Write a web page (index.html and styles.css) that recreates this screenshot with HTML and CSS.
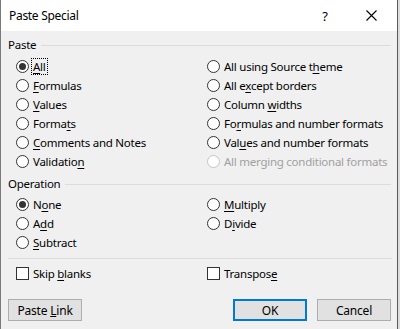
FILE: index.html
```html
<!DOCTYPE html>
<html>
<head>
<meta charset="utf-8">
<link rel="stylesheet" href="styles.css">
</head>
<body>
<div class="window">
  <div class="titlebar">
    <span class="title">Paste Special</span>
    <span class="help">?</span>
    <span class="close"><svg width="11" height="11" viewBox="0 0 11 11"><path d="M0.5 0.5 L10.5 10.5 M10.5 0.5 L0.5 10.5" stroke="#000" stroke-width="1.1" fill="none"/></svg></span>
  </div>
  <div class="content">
    <div class="legend legend-paste"><span>Paste</span><span class="rule"></span></div>
    <div class="grid grid-paste">
      <label class="opt"><span class="radio checked"></span><span class="txt focus"><u>A</u>ll</span></label>
      <label class="opt"><span class="radio"></span><span class="txt">All using Source t<u>h</u>eme</span></label>
      <label class="opt"><span class="radio"></span><span class="txt"><u>F</u>ormulas</span></label>
      <label class="opt"><span class="radio"></span><span class="txt">All e<u>x</u>cept borders</span></label>
      <label class="opt"><span class="radio"></span><span class="txt"><u>V</u>alues</span></label>
      <label class="opt"><span class="radio"></span><span class="txt">Column <u>w</u>idths</span></label>
      <label class="opt"><span class="radio"></span><span class="txt">Forma<u>t</u>s</span></label>
      <label class="opt"><span class="radio"></span><span class="txt">Fo<u>r</u>mulas and number formats</span></label>
      <label class="opt"><span class="radio"></span><span class="txt"><u>C</u>omments and Notes</span></label>
      <label class="opt"><span class="radio"></span><span class="txt">Val<u>u</u>es and number formats</span></label>
      <label class="opt"><span class="radio"></span><span class="txt">Validatio<u>n</u></span></label>
      <label class="opt disabled"><span class="radio"></span><span class="txt">All merging conditional formats</span></label>
    </div>
    <div class="legend legend-op"><span>Operation</span><span class="rule"></span></div>
    <div class="grid grid-op">
      <label class="opt"><span class="radio checked"></span><span class="txt">N<u>o</u>ne</span></label>
      <label class="opt"><span class="radio"></span><span class="txt"><u>M</u>ultiply</span></label>
      <label class="opt"><span class="radio"></span><span class="txt">A<u>d</u>d</span></label>
      <label class="opt"><span class="radio"></span><span class="txt">D<u>i</u>vide</span></label>
      <label class="opt"><span class="radio"></span><span class="txt"><u>S</u>ubtract</span></label>
      <span></span>
    </div>
    <div class="sep"></div>
    <div class="grid grid-check">
      <label class="opt"><span class="check"></span><span class="txt">Skip <u>b</u>lanks</span></label>
      <label class="opt"><span class="check"></span><span class="txt">Transpos<u>e</u></span></label>
    </div>
    <div class="buttons">
      <button class="btn link">Paste <u>L</u>ink</button>
      <span class="spacer"></span>
      <button class="btn ok">OK</button>
      <button class="btn cancel">Cancel</button>
    </div>
  </div>
</div>
</body>
</html>
```
FILE: styles.css
```css
* { box-sizing: border-box; }
html, body { margin: 0; padding: 0; }
body {
  width: 400px;
  height: 329px;
  overflow: hidden;
  background: #dcdcdc;
  font-family: "Noto Sans", "Open Sans", sans-serif;
  font-size: 11.5px;
  letter-spacing: -0.25px;
  color: #000;
}
.window {
  width: 398px;
  height: 329px;
  border-left: 1px solid #7a7a7a;
  border-right: 1px solid #5c5c5c;
  background: #f0f0f0;
}
.titlebar {
  height: 31px;
  background: #fff;
  display: flex;
  align-items: center;
  padding-left: 8px;
}
.title { flex: 1; font-size: 12px; letter-spacing: -0.3px; }
.help { width: 46px; text-align: center; font-size: 13px; }
.close { width: 46px; display: flex; justify-content: center; align-items: center; margin-right: 3px; }
.content { padding: 0 6px 0 7px; }
.legend {
  display: flex;
  align-items: center;
  height: 16px;
  line-height: 16px;
}
.legend .rule { flex: 1; height: 1px; background: #dcdcdc; margin-left: 5px; margin-top: 1px; }
.legend-paste { margin-top: 6px; }
.legend-op { margin-top: 5px; }
.grid {
  display: grid;
  grid-template-columns: 191px 1fr;
  padding-left: 8px;
}
.grid-paste { margin-top: 4px; }
.grid-op { margin-top: 3px; }
.opt {
  display: flex;
  align-items: center;
  height: 19px;
  white-space: nowrap;
}
.radio {
  width: 13px; height: 13px;
  border: 1px solid #333;
  border-radius: 50%;
  background: #fff;
  margin-right: 3px;
  position: relative;
  flex: none;
}
.radio.checked::after {
  content: "";
  position: absolute;
  left: 2px; top: 2px;
  width: 7px; height: 7px;
  border-radius: 50%;
  background: #333;
}
.disabled .radio { border-color: #c4c4c4; }
.disabled .txt { color: #a0a0a0; }
.txt { line-height: 15px; padding: 0 1px; }
.txt u { text-decoration-thickness: 1px; text-underline-offset: 2px; }
.focus { outline: 1px dotted #000; outline-offset: 0; }
.sep { height: 1px; background: #dcdcdc; margin: 6px 0 0 0; width: 384px; }
.grid-check { margin-top: 5px; }
.check {
  width: 13px; height: 13px;
  border: 1px solid #333;
  background: #fff;
  margin-right: 3px;
  flex: none;
}
.buttons {
  display: flex;
  margin-top: 16px;
  gap: 10px;
}
.spacer { flex: 1; }
.btn {
  font: inherit;
  font-size: 12px;
  letter-spacing: -0.2px;
  width: 74px;
  height: 22px;
  background: #e1e1e1;
  border: 1px solid #adadad;
  padding: 0;
  color: #000;
}
.ok { border: 2px solid #0078d7; }
```
